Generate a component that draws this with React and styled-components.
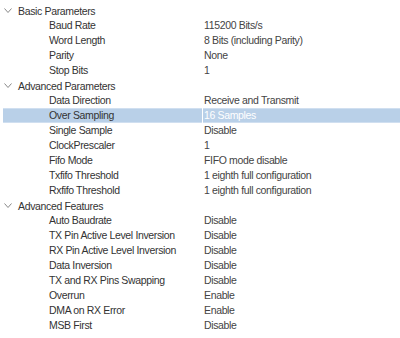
import React from 'react'
import styled, {createGlobalStyle} from 'styled-components'

const Global = createGlobalStyle`
  body {
    margin: 0;
    background: #fff;
    font-family: "Liberation Sans", Arial, sans-serif;
  }
`;

const sections = [
  {
    title: 'Basic Parameters',
    rows: [
      ['Baud Rate', '115200 Bits/s'],
      ['Word Length', '8 Bits (including Parity)'],
      ['Parity', 'None'],
      ['Stop Bits', '1'],
    ]
  },
  {
    title: 'Advanced Parameters',
    rows: [
      ['Data Direction', 'Receive and Transmit'],
      ['Over Sampling', '16 Samples', true],
      ['Single Sample', 'Disable'],
      ['ClockPrescaler', '1'],
      ['Fifo Mode', 'FIFO mode disable'],
      ['Txfifo Threshold', '1 eighth full configuration'],
      ['Rxfifo Threshold', '1 eighth full configuration'],
    ]
  },
  {
    title: 'Advanced Features',
    rows: [
      ['Auto Baudrate', 'Disable'],
      ['TX Pin Active Level Inversion', 'Disable'],
      ['RX Pin Active Level Inversion', 'Disable'],
      ['Data Inversion', 'Disable'],
      ['TX and RX Pins Swapping', 'Disable'],
      ['Overrun', 'Enable'],
      ['DMA on RX Error', 'Enable'],
      ['MSB First', 'Disable'],
    ]
  },
];

const Tree = styled.div`
  width: 400px;
  height: 338px;
  padding-top: 3px;
  box-sizing: border-box;
  font-size: 10.5px;
  letter-spacing: -0.35px;
  color: #333;
`;

const Header = styled.div`
  display: flex;
  align-items: center;
  height: 15px;
  padding-left: 4px;
`;

const Chevron = styled.svg`
  width: 8px;
  height: 6px;
  margin-right: 6px;
  margin-top: 1px;
`;

const Row = styled.div`
  display: grid;
  grid-template-columns: 199px 1fr;
  height: 15px;
  margin-left: 3px;
  background: ${p => p.selected ? '#b9d0e8' : 'transparent'};
  box-shadow: ${p => p.selected ? 'inset 0 1px 0 #d0dff0, inset 0 -1px 0 #d0dff0' : 'none'};
`;

const Label = styled.div`
  padding-left: 46px;
  line-height: 15px;
  white-space: nowrap;
  overflow: hidden;
`;

const Value = styled.div`
  padding-left: 1px;
  line-height: 15px;
  white-space: nowrap;
  color: ${p => p.selected ? '#fff' : '#444'};
  border-left: 1px solid ${p => p.selected ? '#fff' : 'transparent'};
`;

export default function App() {
  return (
    <Tree>
      <Global/>
      {sections.map(s => (
        <div key={s.title}>
          <Header>
            <Chevron viewBox="0 0 8 6">
              <path d="M0.5 0.5 L4 4.5 L7.5 0.5" fill="none" stroke="#888" strokeWidth="1"/>
            </Chevron>
            {s.title}
          </Header>
          {s.rows.map(([label, value, sel]) => (
            <Row key={label} selected={sel}>
              <Label>{label}</Label>
              <Value selected={sel}>{value}</Value>
            </Row>
          ))}
        </div>
      ))}
    </Tree>
  );
}
